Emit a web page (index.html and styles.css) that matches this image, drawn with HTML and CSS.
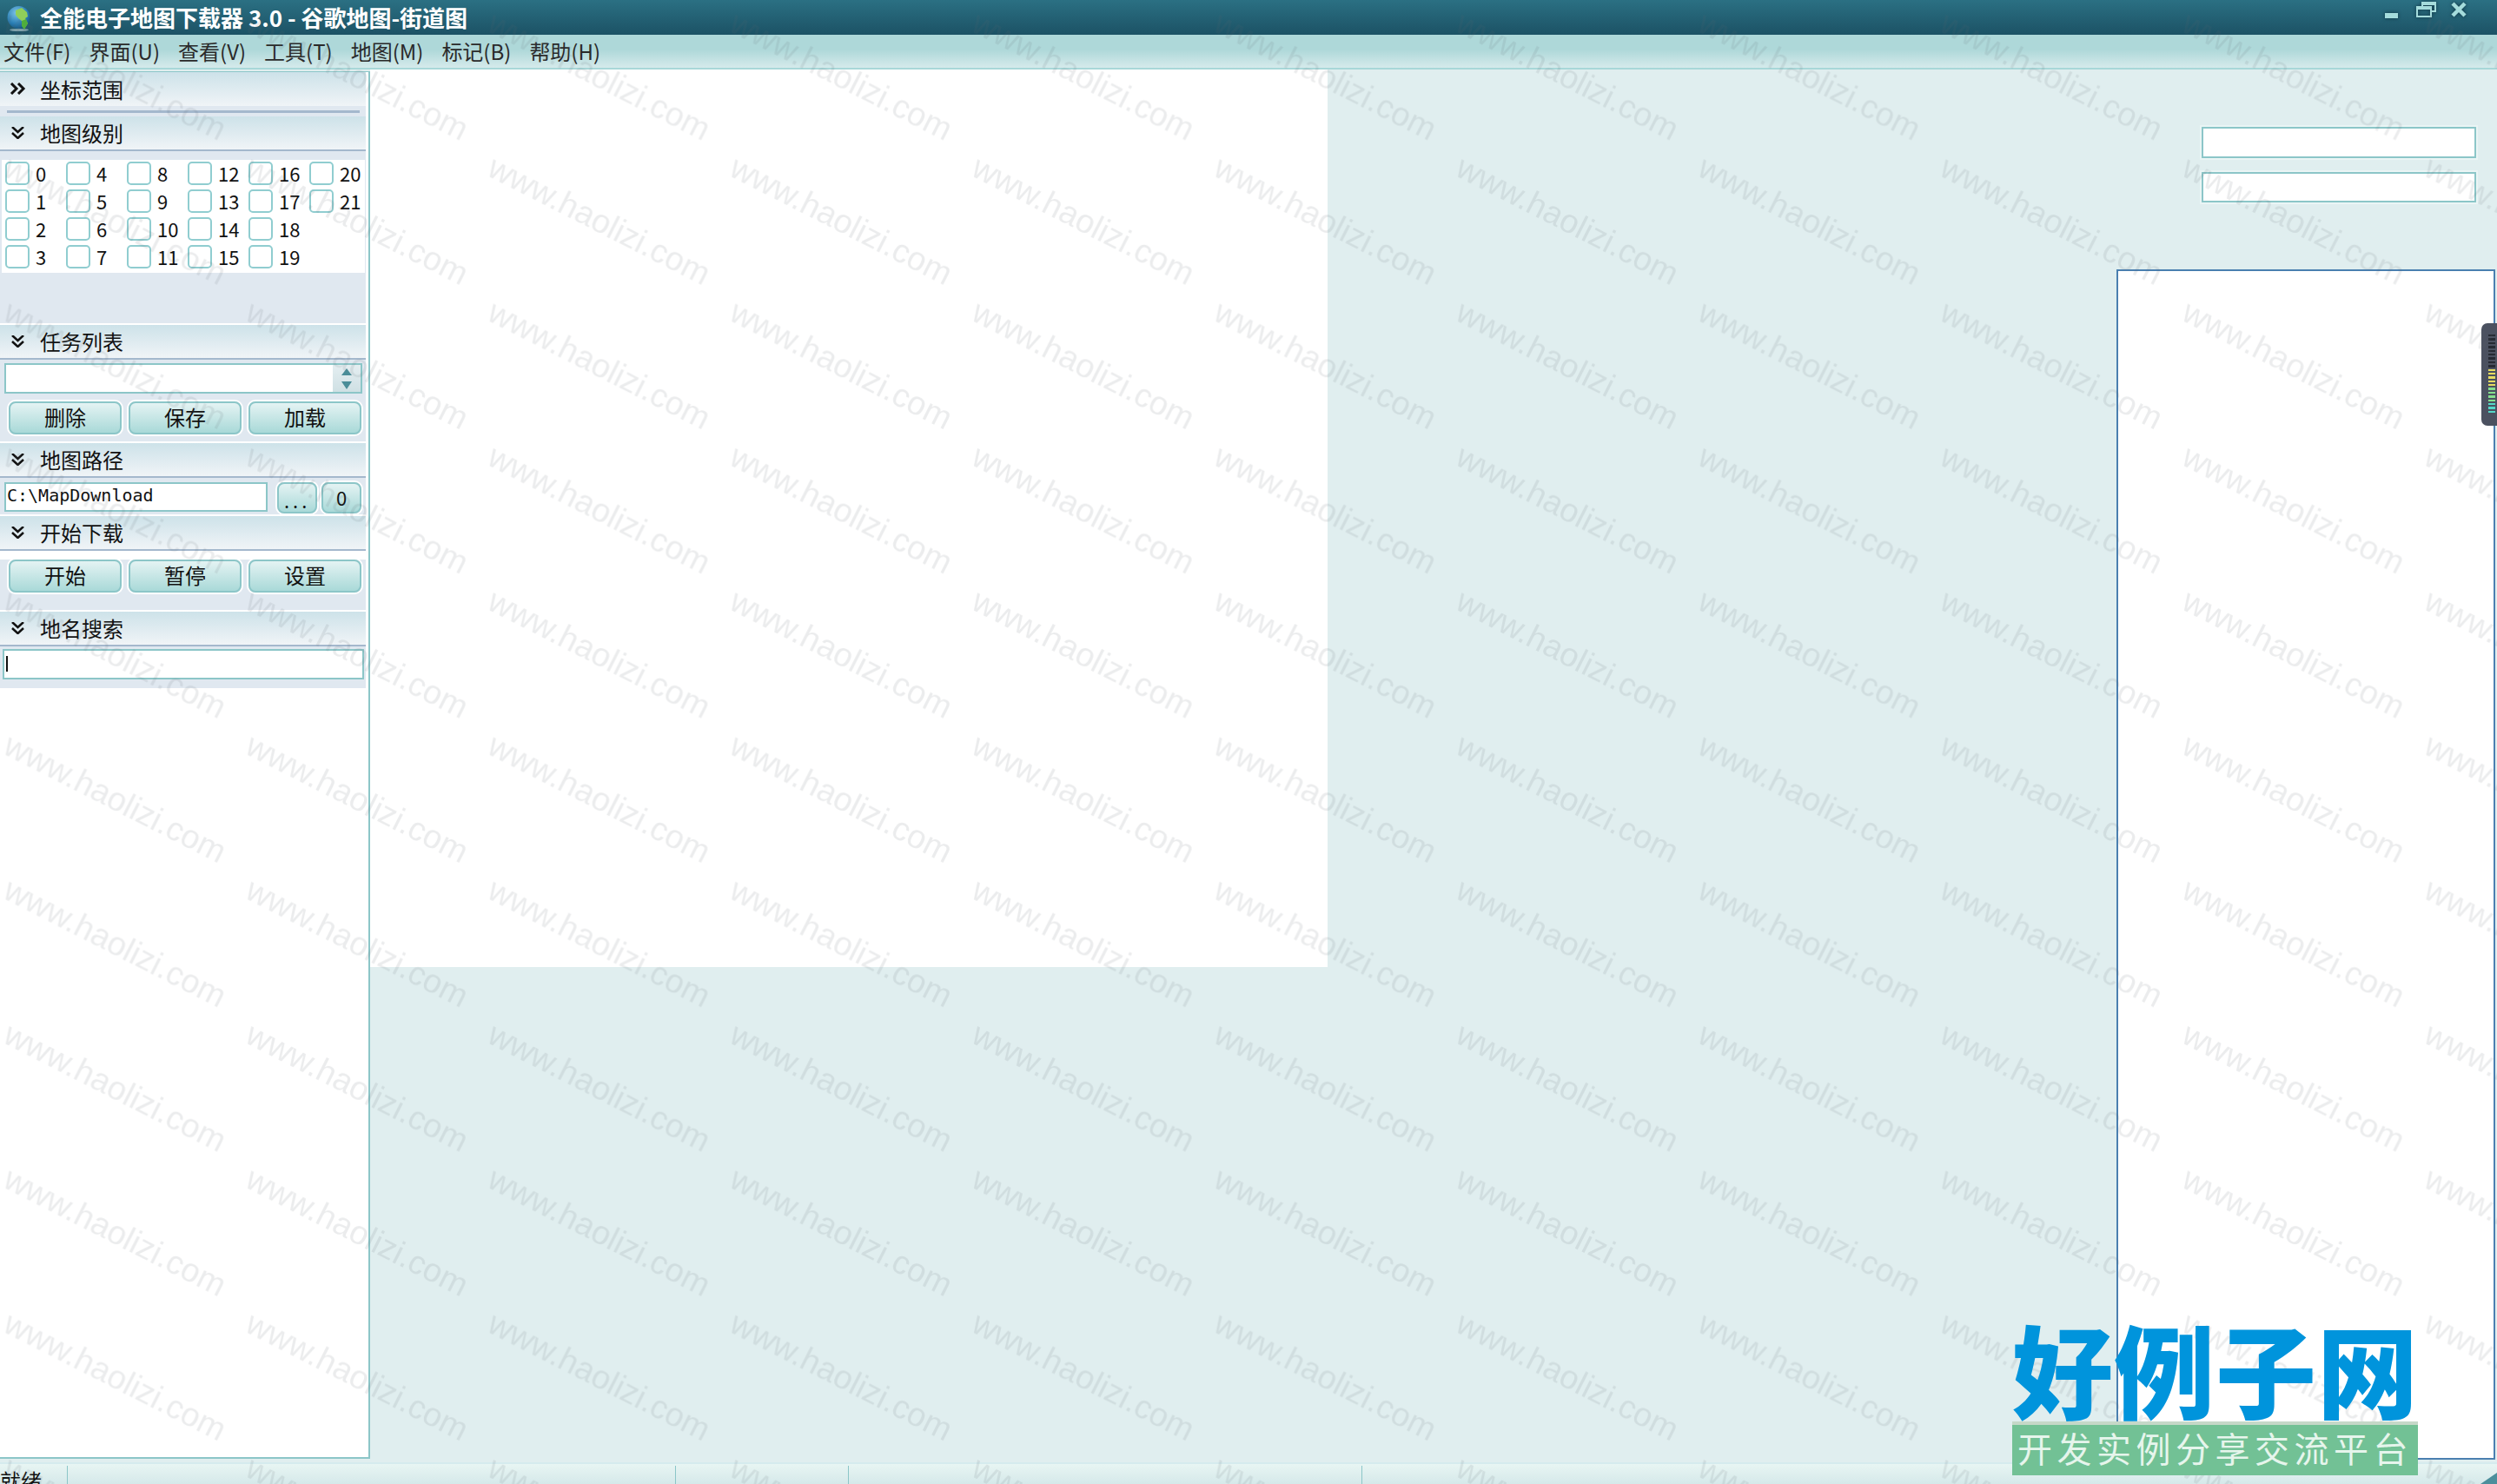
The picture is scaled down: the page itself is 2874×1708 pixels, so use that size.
FILE: index.html
```html
<!DOCTYPE html>
<html lang="zh-CN">
<head>
    <meta charset="UTF-8">
    <title>全能电子地图下载器 3.0 - 谷歌地图-街道图</title>
    <link rel="stylesheet" href="styles.css">
</head>
<body>
    <div class="app">
        <div class="titlebar">
            <svg class="app-icon" viewBox="0 0 28 30">
                <defs>
                    <radialGradient id="globe" cx="0.4" cy="0.3" r="0.8">
                        <stop offset="0" stop-color="#7fc4e8"/>
                        <stop offset="0.6" stop-color="#2a7fb5"/>
                        <stop offset="1" stop-color="#0f4a70"/>
                    </radialGradient>
                </defs>
                <ellipse cx="14" cy="27.5" rx="11" ry="1.6" fill="#7fa3ad"/>
                <circle cx="13.500" cy="13" r="13" fill="url(#globe)"/>
                <path d="M10 5 L17 2 L23 7 L24 12 L21 14 L24 20 L20 26 L18 24 L17 17 L13 14 L10 10 Z" fill="#8fcf5a"/>
                <path d="M17 17 L22 15 L24 20 L20 27 L17 23 Z" fill="#4fae3c"/>
            </svg>
            <span class="app-title">全能电子地图下载器 3.0 - 谷歌地图-街道图</span>
            <div class="window-btns">
                <svg class="win-min" viewBox="0 0 15 6"><rect width="15" height="6" fill="#a5dcdc"/></svg>
                <svg class="win-restore" viewBox="0 0 23 18">
                    <path d="M7 5V1H22V11H18M1 6H17V17H1Z" fill="none" stroke="#a5dcdc" stroke-width="2"/>
                    <path d="M7 3H22M1 8H17" stroke="#a5dcdc" stroke-width="2"/>
                </svg>
                <svg class="win-close" viewBox="0 0 20 18"><path d="M3 2L17 16M17 2L3 16" stroke="#a5dcdc" stroke-width="4.500"/></svg>
            </div>
        </div>

        <div class="menubar">
            <span>文件(F)</span>
            <span>界面(U)</span>
            <span>查看(V)</span>
            <span>工具(T)</span>
            <span>地图(M)</span>
            <span>标记(B)</span>
            <span>帮助(H)</span>
        </div>

        <div class="main">
            <div class="sidebar">
                <div class="section">
                    <div class="section-head no-line">
                        <svg class="chevron" viewBox="0 0 19 14"><path d="M2 1L8 7L2 13M10 1L16 7L10 13" fill="none" stroke="#111" stroke-width="3"/></svg>
                        坐标范围
                    </div>
                    <div class="collapsed-foot"><div class="collapsed-line"></div></div>
                </div>

                <div class="section">
                    <div class="section-head">
                        <svg class="chevron" viewBox="0 0 19 14"><path d="M3 0L9.500 6L16 0M3 7L9.500 13L16 7" fill="none" stroke="#111" stroke-width="2.500"/></svg>
                        地图级别
                    </div>
                    <div class="section-body levels-body">
                        <div class="levels">
                            <label class="level"><i class="check"></i>0</label>
                            <label class="level"><i class="check"></i>4</label>
                            <label class="level"><i class="check"></i>8</label>
                            <label class="level"><i class="check"></i>12</label>
                            <label class="level"><i class="check"></i>16</label>
                            <label class="level"><i class="check"></i>20</label>
                            <label class="level"><i class="check"></i>1</label>
                            <label class="level"><i class="check"></i>5</label>
                            <label class="level"><i class="check"></i>9</label>
                            <label class="level"><i class="check"></i>13</label>
                            <label class="level"><i class="check"></i>17</label>
                            <label class="level"><i class="check"></i>21</label>
                            <label class="level"><i class="check"></i>2</label>
                            <label class="level"><i class="check"></i>6</label>
                            <label class="level"><i class="check"></i>10</label>
                            <label class="level"><i class="check"></i>14</label>
                            <label class="level"><i class="check"></i>18</label>
                            <span></span>
                            <label class="level"><i class="check"></i>3</label>
                            <label class="level"><i class="check"></i>7</label>
                            <label class="level"><i class="check"></i>11</label>
                            <label class="level"><i class="check"></i>15</label>
                            <label class="level"><i class="check"></i>19</label>
                        </div>
                    </div>
                </div>

                <div class="section">
                    <div class="section-head">
                        <svg class="chevron" viewBox="0 0 19 14"><path d="M3 0L9.500 6L16 0M3 7L9.500 13L16 7" fill="none" stroke="#111" stroke-width="2.500"/></svg>
                        任务列表
                    </div>
                    <div class="section-body tasks-body">
                        <div class="combo">
                            <div class="combo-spin">
                                <svg viewBox="0 0 14 24"><path d="M7 0L13 8H1ZM1 15H13L7 24Z" fill="#4a8d98"/></svg>
                            </div>
                        </div>
                        <div class="btn-row">
                            <button class="btn">删除</button>
                            <button class="btn">保存</button>
                            <button class="btn">加载</button>
                        </div>
                    </div>
                </div>

                <div class="section">
                    <div class="section-head">
                        <svg class="chevron" viewBox="0 0 19 14"><path d="M3 0L9.500 6L16 0M3 7L9.500 13L16 7" fill="none" stroke="#111" stroke-width="2.500"/></svg>
                        地图路径
                    </div>
                    <div class="section-body path-body">
                        <div class="path-box">C:\MapDownload</div>
                        <button class="btn btn-small btn-dots">...</button>
                        <button class="btn btn-small">0</button>
                    </div>
                </div>

                <div class="section">
                    <div class="section-head">
                        <svg class="chevron" viewBox="0 0 19 14"><path d="M3 0L9.500 6L16 0M3 7L9.500 13L16 7" fill="none" stroke="#111" stroke-width="2.500"/></svg>
                        开始下载
                    </div>
                    <div class="section-body start-body">
                        <div class="btn-row">
                            <button class="btn">开始</button>
                            <button class="btn">暂停</button>
                            <button class="btn">设置</button>
                        </div>
                    </div>
                </div>

                <div class="section">
                    <div class="section-head">
                        <svg class="chevron" viewBox="0 0 19 14"><path d="M3 0L9.500 6L16 0M3 7L9.500 13L16 7" fill="none" stroke="#111" stroke-width="2.500"/></svg>
                        地名搜索
                    </div>
                    <div class="section-body search-body">
                        <div class="search-box"><i class="caret"></i></div>
                    </div>
                </div>
            </div>

            <div class="workspace">
                <div class="map-canvas"></div>
                <div class="right-col">
                    <div class="coord-box"></div>
                    <div class="coord-box coord-box-2"></div>
                    <div class="side-panel"></div>
                </div>
            </div>
        </div>

        <div class="statusbar">
            <div class="status-cell status-ready"><span>就绪</span></div>
            <div class="status-cell status-wide"></div>
            <div class="status-cell status-mid"></div>
            <div class="status-cell status-long"></div>
            <svg class="grip" viewBox="0 0 19 13"><path d="M19 0V13H0Z" fill="#4c8f9c"/></svg>
        </div>
    </div>

    <!-- floating meter on the right edge -->
    <div class="meter">
        <i></i><i></i><i></i><i></i><i></i><i></i><i></i><i></i><i></i>
        <i class="y"></i><i class="y"></i><i class="y"></i><i class="y"></i><i class="y"></i>
        <i class="g"></i><i class="g"></i><i class="g"></i><i class="g"></i>
        <i class="t"></i><i class="t"></i><i class="t"></i>
    </div>

    <svg class="watermark" width="2874" height="1708">
        <defs>
            <pattern id="wm" patternUnits="userSpaceOnUse" x="-8.400" y="15" width="278.600" height="166.300">
                <text x="0" y="0" transform="translate(10,20) rotate(27)">www.haolizi.com</text>
            </pattern>
        </defs>
        <rect width="2874" height="1708" fill="url(#wm)"/>
    </svg>

    <div class="site-logo">
        <div class="site-name">好例子网</div>
        <div class="site-slogan">开发实例分享交流平台</div>
    </div>
</body>
</html>
```

FILE: styles.css
```css
* {
    box-sizing: border-box;
}
body {
    margin: 0;
    width: 2874px;
    height: 1708px;
    position: relative;
    overflow: hidden;
    font-family: "Noto Sans CJK SC", "Liberation Sans", sans-serif;
    font-size: 24px;
    color: #111;
    background: #e0eeef;
}
.app {
    height: 1708px;
    display: flex;
    flex-direction: column;
}

/* title bar */
.titlebar {
    height: 40px;
    display: flex;
    align-items: center;
    background: linear-gradient(to bottom, #2b7083, #1c5265);
    color: #fff;
}
.app-icon {
    width: 28px;
    height: 30px;
    margin-left: 8px;
    margin-top: 4px;
}
.app-title {
    margin-left: 10px;
    font-size: 26px;
    font-weight: bold;
    line-height: 40px;
    white-space: nowrap;
}
.window-btns {
    margin-left: auto;
    height: 40px;
    position: relative;
    width: 112px;
    flex: none;
    margin-right: 17px;
}
.window-btns svg {
    position: absolute;
    filter: drop-shadow(0 0 2px #0d3240);
}
.win-min { left: 0; top: 15px; width: 15px; height: 6px; }
.win-restore { left: 36px; top: 2px; width: 23px; height: 18px; }
.win-close { left: 75px; top: 2px; width: 20px; height: 18px; }

/* menu */
.menubar {
    height: 40px;
    display: flex;
    gap: 21px;
    padding-left: 4px;
    align-items: center;
    background: linear-gradient(to bottom, #aed8d9 0, #aed8d9 45%, #d5eaeb 100%);
    border-bottom: 2px solid #a8d7d8;
    color: #2a2a2a;
    font-size: 24px;
    line-height: 38px;
}

.main {
    flex: 1;
    display: flex;
    min-height: 0;
}

/* left panel */
.sidebar {
    width: 426px;
    flex: none;
    margin-top: 2px;
    margin-bottom: 4px;
    background: #fff;
    border-top: 1px solid #8cc6c8;
    border-right: 2px solid #8cc6c8;
    border-bottom: 2px solid #8cc6c8;
}
.section {
    width: 421px;
    margin-bottom: 2px;
}
.section-head {
    height: 40px;
    display: flex;
    align-items: center;
    background: linear-gradient(to bottom, #cde2e9, #f0f4f7);
    border-bottom: 2px solid #a4b8cd;
    padding-left: 46px;
    position: relative;
    line-height: 38px;
}
.section-head.no-line {
    height: 39px;
    border-bottom: 0;
}
.chevron {
    position: absolute;
    left: 11px;
    top: 12px;
    width: 19px;
    height: 14px;
}
.collapsed-foot {
    height: 12px;
    background: #e0e8f0;
    padding: 5px 7px 0 8px;
    margin-bottom: -2px;
}
.collapsed-line {
    height: 3px;
    background: #a4b8cd;
}
.section-body {
    background: #e0e8f0;
}
.levels-body {
    height: 198px;
    padding: 10px 1px 0 2px;
}
.levels {
    height: 130px;
    background: #fff;
    display: grid;
    grid-template-columns: repeat(6, 70px);
    grid-auto-rows: 32px;
    padding: 2px 0 0 4px;
}
.level {
    height: 27px;
    display: flex;
    align-items: center;
    gap: 7px;
    font-size: 22px;
    line-height: 27px;
}
.check {
    width: 28px;
    height: 27px;
    flex: none;
    border: 2px solid #90cdd0;
    border-radius: 5px;
    background: #fff;
}

.tasks-body {
    height: 94px;
    padding: 4px 4px 0 5px;
}
.combo {
    height: 35px;
    background: #fff;
    border: 2px solid #8cc6c8;
    display: flex;
    justify-content: flex-end;
}
.combo-spin {
    width: 32px;
    background: linear-gradient(to bottom, #e4eef1, #cfe0e4);
    display: flex;
    align-items: center;
    justify-content: center;
}
.combo-spin svg {
    width: 14px;
    height: 24px;
}
.btn-row {
    display: flex;
    gap: 8px;
    margin-left: 5px;
    margin-top: 9px;
}
.start-body .btn-row {
    margin-left: 10px;
    margin-top: 10px;
}
.btn {
    width: 130px;
    height: 38px;
    padding: 0 0 2px;
    border: 2px solid #8cc6c8;
    border-radius: 8px;
    background: linear-gradient(to bottom, #e4f3f3, #a9d9d8);
    box-shadow: 0 0 0 2px #fff;
    color: #111;
    font-family: inherit;
    font-size: 24px;
    line-height: 30px;
}
.path-body {
    height: 42px;
    display: flex;
    padding: 5px 0 0 5px;
}
.path-box {
    width: 304px;
    height: 34px;
    background: #fff;
    border: 2px solid #8cc6c8;
    padding-left: 1px;
    font-family: "DejaVu Sans Mono", "Liberation Mono", monospace;
    font-size: 20px;
    line-height: 26px;
    margin-right: 11px;
}
.btn-small {
    width: 46px;
    height: 36px;
    margin-right: 5px;
    font-size: 22px;
}
.btn-dots {
    letter-spacing: 4px;
    line-height: 36px;
}
.start-body {
    height: 58px;
    padding-top: 0;
}
.search-body {
    height: 48px;
    padding: 3px 0 0 3px;
}
.search-box {
    width: 416px;
    height: 35px;
    background: #fff;
    border: 2px solid #8cc6c8;
    padding: 6px 0 0 2px;
}
.caret {
    display: block;
    width: 2px;
    height: 18px;
    background: #111;
}

/* map area */
.workspace {
    flex: 1;
    display: flex;
    justify-content: space-between;
    margin-bottom: 3px;
}
.map-canvas {
    width: 1102px;
    height: 1033px;
    background: #fff;
}
.right-col {
    width: 438px;
    display: flex;
    flex-direction: column;
    padding-top: 66px;
}
.coord-box {
    width: 316px;
    height: 36px;
    margin-left: 98px;
    background: #fff;
    border: 2px solid #8cc6c8;
    box-shadow: 0 0 0 2px #eaf5f5;
}
.coord-box-2 {
    margin-top: 16px;
    height: 35px;
}
.side-panel {
    flex: 1;
    width: 436px;
    margin-top: 77px;
    background: #fff;
    border: 2px solid #4a7fb0;
}

/* status bar */
.statusbar {
    height: 25px;
    display: flex;
    position: relative;
    overflow: hidden;
    padding-top: 2px;
    border-top: 2px solid #d5ebee;
    background: linear-gradient(to bottom, #e8f5f3, #d5e9ea);
}
.status-cell {
    height: 100%;
    flex: none;
    border-right: 1px solid #8cc6c8;
}
.status-ready { width: 78px; position: relative; }
.status-ready span {
    position: absolute;
    left: 0;
    top: 3px;
    line-height: 28px;
    color: #111;
    white-space: nowrap;
}
.status-wide { width: 700px; }
.status-mid { width: 199px; }
.status-long { width: 591px; }
.grip {
    position: absolute;
    right: 0;
    bottom: 0;
    width: 19px;
    height: 13px;
}

/* overlays */
.meter {
    position: absolute;
    left: 2856px;
    top: 372px;
    width: 18px;
    height: 118px;
    padding: 13px 2px 0 8px;
    background: #4b5160;
    border-radius: 7px 0 0 7px;
    display: flex;
    flex-direction: column;
    gap: 2px;
}
.meter i {
    display: block;
    height: 2.400px;
    background: #262a33;
}
.meter i.y { background: #e6dc62; }
.meter i.g { background: #86e08e; }
.meter i.t { background: #55d8c8; }

.watermark {
    position: absolute;
    left: 0;
    top: 0;
    pointer-events: none;
}
.watermark text {
    font-family: "Liberation Sans", sans-serif;
    font-size: 38px;
    fill: rgba(90, 100, 105, 0.12);
}

.site-logo {
    position: absolute;
    right: 91px;
    bottom: 10px;
    width: 467px;
    display: flex;
    flex-direction: column;
}
.site-name {
    height: 121px;
    font-size: 116px;
    font-weight: 900;
    line-height: 116px;
    letter-spacing: 1px;
    color: #0094dc;
    white-space: nowrap;
}
.site-slogan {
    height: 62px;
    background: #72c195;
    border-top: 4px solid #c5d8c8;
    color: #e6f5ec;
    font-size: 40px;
    line-height: 52px;
    letter-spacing: 5.500px;
    padding-left: 6px;
    white-space: nowrap;
}
```
